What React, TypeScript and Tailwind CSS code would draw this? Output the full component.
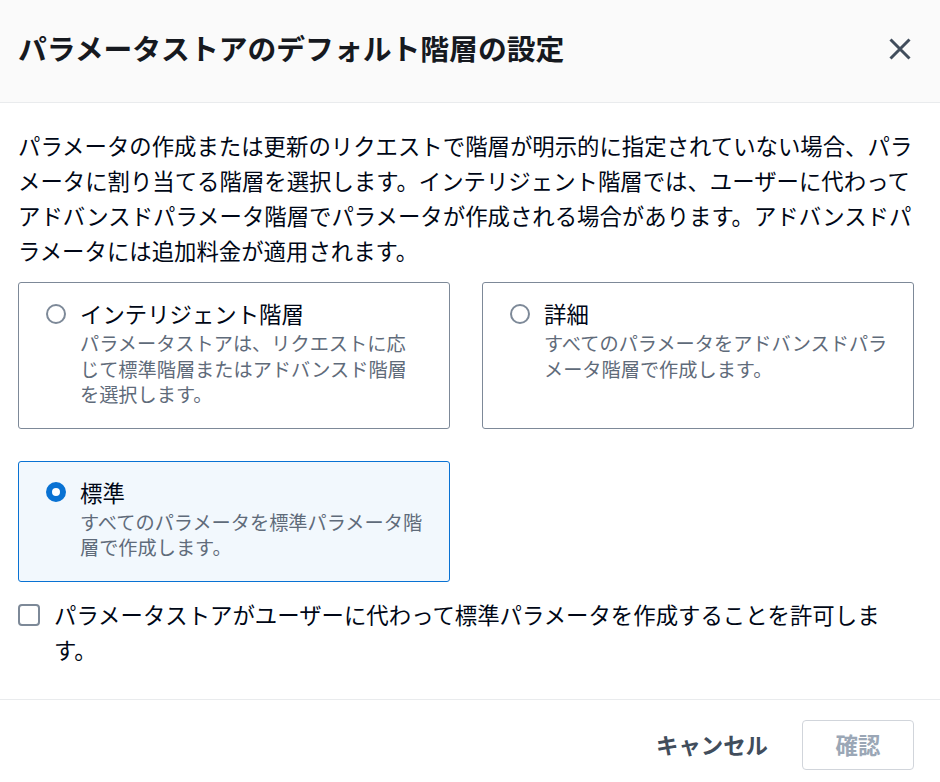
import React from "react";

const font = { fontFamily: '"Noto Sans CJK JP", "Noto Sans", sans-serif' };

function Radio({ checked }: { checked: boolean }) {
  return checked ? (
    <span className="mt-[7.5px] box-border block h-[20px] w-[20px] shrink-0 rounded-full border-[6px] border-[#0972d3] bg-white" />
  ) : (
    <span className="mt-[7.5px] box-border block h-[20px] w-[20px] shrink-0 rounded-full border-2 border-[#7d8998] bg-white" />
  );
}

function Tile({
  label,
  lines,
  checked,
}: {
  label: string;
  lines: string[];
  checked: boolean;
}) {
  return (
    <div
      className={
        checked
          ? "flex gap-[14px] rounded-[3px] border border-[#0972d3] bg-[#f2f8fd] pb-[20px] pl-[27px] pr-[16px] pt-[13px]"
          : "flex gap-[14px] rounded-[3px] border border-[#7d8998] bg-white pb-[20px] pl-[27px] pr-[16px] pt-[13px]"
      }
    >
      <Radio checked={checked} />
      <div className="flex min-w-0 flex-col">
        <div className="text-[22.4px] leading-[35px] text-[#000716]">{label}</div>
        <div className="text-[19.2px] leading-[25.6px] text-[#5f6b7a]">
          {lines.map((l, i) => (
            <span key={i} className="block whitespace-nowrap">
              {l}
            </span>
          ))}
        </div>
      </div>
    </div>
  );
}

export default function App() {
  return (
    <div style={font} className="flex h-[782px] w-[940px] flex-col overflow-hidden bg-white">
      <div className="flex h-[103px] shrink-0 items-center justify-between border-b border-[#e9ebed] bg-[#fafafa] pl-[18px] pr-[28px]">
        <h1 className="pb-[6px] text-[28.8px] font-bold leading-[36px] text-[#16191f]">
          パラメータストアのデフォルト階層の設定
        </h1>
        <svg width="24" height="24" viewBox="0 0 24 24" className="mb-[4px]">
          <path d="M2.5 2.5 L21.5 21.5 M21.5 2.5 L2.5 21.5" stroke="#414d5c" strokeWidth="3" fill="none" />
        </svg>
      </div>

      <div className="flex flex-col pb-[32px] pl-[18px] pr-[26px] pt-[25px]">
        <p className="-mr-[8px] text-[22.4px] leading-[35px] text-[#000716]">
          パラメータの作成または更新のリクエストで階層が明示的に指定されていない場合、パラメータに割り当てる階層を選択します。インテリジェント階層では、ユーザーに代わってアドバンスドパラメータ階層でパラメータが作成される場合があります。アドバンスドパラメータには追加料金が適用されます。
        </p>

        <div className="mt-[14px] grid grid-cols-2 gap-[32px]">
          <Tile
            label="インテリジェント階層"
            lines={["パラメータストアは、リクエストに応", "じて標準階層またはアドバンスド階層", "を選択します。"]}
            checked={false}
          />
          <Tile
            label="詳細"
            lines={["すべてのパラメータをアドバンスドパラ", "メータ階層で作成します。"]}
            checked={false}
          />
          <Tile
            label="標準"
            lines={["すべてのパラメータを標準パラメータ階", "層で作成します。"]}
            checked={true}
          />
        </div>

        <div className="mt-[15px] flex gap-[14px]">
          <span className="mt-[7px] box-border block h-[22px] w-[22px] shrink-0 rounded-[4px] border-2 border-[#7d8998] bg-white" />
          <span className="text-[22.4px] leading-[35px] text-[#000716]">
            パラメータストアがユーザーに代わって標準パラメータを作成することを許可します。
          </span>
        </div>
      </div>

      <div className="flex justify-end gap-[14px] border-t border-[#e9ebed] px-[26px] pt-[20px]">
        <button className="h-[50px] px-[20px] text-[22.4px] font-bold text-[#414d5c]">キャンセル</button>
        <button className="box-border h-[50px] w-[112px] rounded-[4px] border border-[#d1d5db] bg-white text-[22.4px] font-bold text-[#9ba7b6]">
          確認
        </button>
      </div>
    </div>
  );
}
